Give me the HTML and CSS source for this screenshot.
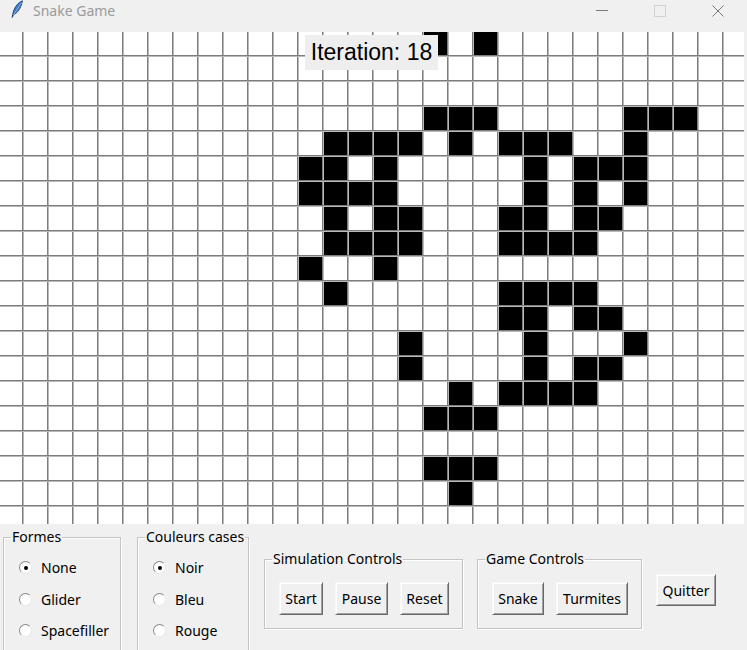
FILE: index.html
```html
<!DOCTYPE html>
<html lang="fr">
<head>
<meta charset="utf-8">
<title>Snake Game</title>
<link rel="stylesheet" href="styles.css">
</head>
<body>
<div class="window">
  <div class="titlebar">
    <svg class="app-icon" width="14" height="20" viewBox="0 0 14 20">
      <path d="M12.5 0.8 C8 2.5 4.5 7 3 13 L2.2 17.5 L3.6 14.5 C7.5 13 10.5 9 12.5 0.8 Z" fill="#3b78c8" stroke="#1d3f72" stroke-width="0.9"/>
      <path d="M11.5 2.5 L3.4 15" stroke="#9cc2f0" stroke-width="0.8"/>
    </svg>
    <span class="title">Snake Game</span>
    <div class="win-buttons">
      <span class="wb"><svg width="12" height="12" viewBox="0 0 12 12"><path d="M0 5.5 H12" stroke="#7a7a7a" stroke-width="1"/></svg></span>
      <span class="wb"><svg width="12" height="12" viewBox="0 0 12 12"><rect x="0.5" y="0.5" width="11" height="11" fill="none" stroke="#d2d2d2" stroke-width="1"/></svg></span>
      <span class="wb"><svg width="12" height="12" viewBox="0 0 12 12"><path d="M0.5 0.5 L11.5 11.5 M11.5 0.5 L0.5 11.5" stroke="#7a7a7a" stroke-width="1"/></svg></span>
    </div>
  </div>

  <div class="board">
    <svg class="grid" width="744" height="492" viewBox="0 0 744 492">
      <defs>
        <pattern id="gridlines" x="-3" y="-2" width="25" height="25" patternUnits="userSpaceOnUse">
          <rect x="0" y="0" width="1" height="25" fill="#7d7d7d"/>
          <rect x="1" y="0" width="1" height="25" fill="#b9b9b9"/>
          <rect x="0" y="0" width="25" height="1" fill="#7d7d7d"/>
          <rect x="0" y="1" width="25" height="1" fill="#b9b9b9"/>
        </pattern>
      </defs>
      <g id="cells" fill="#000"></g>
      <rect x="0" y="0" width="744" height="492" fill="url(#gridlines)"/>
    </svg>
    <div class="iteration">Iteration: 18</div>
  </div>

  <div class="controls">
    <fieldset class="group group-radio">
      <legend>Formes</legend>
      <div class="group-body radio-list">
        <label class="radio-row"><span class="radio checked"></span>None</label>
        <label class="radio-row"><span class="radio"></span>Glider</label>
        <label class="radio-row"><span class="radio"></span>Spacefiller</label>
      </div>
    </fieldset>
    <fieldset class="group group-radio group-colors">
      <legend>Couleurs cases</legend>
      <div class="group-body radio-list">
        <label class="radio-row"><span class="radio checked"></span>Noir</label>
        <label class="radio-row"><span class="radio"></span>Bleu</label>
        <label class="radio-row"><span class="radio"></span>Rouge</label>
      </div>
    </fieldset>
    <fieldset class="group group-buttons">
      <legend>Simulation Controls</legend>
      <div class="group-body button-row">
        <button class="btn btn-start">Start</button>
        <button class="btn btn-pause">Pause</button>
        <button class="btn btn-reset">Reset</button>
      </div>
    </fieldset>
    <fieldset class="group group-buttons group-game">
      <legend>Game Controls</legend>
      <div class="group-body button-row">
        <button class="btn btn-snake">Snake</button>
        <button class="btn btn-turmites">Turmites</button>
      </div>
    </fieldset>
    <button class="btn btn-quit">Quitter</button>
  </div>
</div>
<script src="script.js"></script>
</body>
</html>
```

FILE: styles.css
```css
* { box-sizing: border-box; }

html, body {
  margin: 0;
  padding: 0;
  width: 747px;
  height: 650px;
  overflow: hidden;
  background: #f0f0f0;
  font-family: "Noto Sans", "Open Sans", sans-serif;
  color: #000;
}

.window {
  width: 747px;
  height: 650px;
  display: flex;
  flex-direction: column;
}

/* ---------- title bar ---------- */
.titlebar {
  height: 32px;
  flex: 0 0 32px;
  display: flex;
  align-items: flex-start;
  background: #f0f0f0;
}

.app-icon {
  margin-left: 10px;
  margin-top: 0px;
}

.title {
  margin-left: 9px;
  margin-top: 1px;
  font-size: 14px;
  line-height: 20px;
  color: #9a9a9a;
}

.win-buttons {
  margin-left: auto;
  display: flex;
  height: 32px;
}

.wb {
  width: 58px;
  height: 22px;
  display: flex;
  align-items: center;
  justify-content: center;
}

/* ---------- board ---------- */
.board {
  position: relative;
  width: 744px;
  height: 492px;
  flex: 0 0 492px;
}

.grid {
  display: block;
  background: #ffffff;
}

.iteration {
  position: absolute;
  left: 305px;
  top: 3px;
  width: 133px;
  height: 35px;
  background: #eeeeee;
  font-family: "Liberation Sans", Arial, sans-serif;
  font-size: 23px;
  line-height: 35px;
  text-align: center;
  color: #000;
}

/* ---------- controls ---------- */
.controls {
  flex: 1 1 auto;
  display: flex;
  align-items: flex-start;
  padding-left: 3px;
}

.group {
  margin: 0;
  padding: 0;
  border: 1px solid #c4c4c4;
  box-shadow: inset 1px 1px 0 #ffffff, 1px 1px 0 #ffffff;
  font-size: 14px;
  white-space: nowrap;
}

.group legend {
  padding: 0 1px;
  margin-left: 7px;
  line-height: 18px;
  color: #000;
}

.group-radio {
  width: 118px;
  height: 140px;
  margin-top: 4px;
}

.radio-list {
  display: flex;
  flex-direction: column;
  padding: 6px 0 0 15px;
}

.group-colors {
  width: 112px;
  margin-left: 16px;
}

.radio-row {
  display: flex;
  align-items: center;
  height: 31.5px;
  font-size: 14px;
}

.radio {
  width: 13px;
  height: 13px;
  border-radius: 50%;
  background: #ffffff;
  border: 1px solid;
  border-color: #8a8a8a #e8e8e8 #e8e8e8 #8a8a8a;
  margin-right: 9px;
  position: relative;
  flex: 0 0 13px;
}

.radio.checked::after {
  content: "";
  position: absolute;
  left: 3.5px;
  top: 3.5px;
  width: 4px;
  height: 4px;
  border-radius: 50%;
  background: #000;
}

.group-buttons {
  margin-top: 26px;
  margin-left: 15px;
  height: 79px;
}

.group-game {
  margin-left: 14px;
}

.button-row {
  display: flex;
  align-items: flex-start;
  gap: 12px;
  padding: 14px 13px 0 14px;
}

.btn {
  font-family: "Noto Sans", "Open Sans", sans-serif;
  font-size: 14px;
  height: 33px;
  padding: 0;
  background: #f0f0f0;
  color: #000;
  border: 1px solid;
  border-color: #f8f8f8 #696969 #696969 #f8f8f8;
  box-shadow: inset 1px 1px 0 #ffffff, inset -1px -1px 0 #a0a0a0;
  border-radius: 0;
}

.btn-start { width: 44px; }
.btn-pause { width: 53px; }
.btn-reset { width: 49px; }
.btn-snake { width: 52px; }
.btn-turmites { width: 72px; }

.btn-quit {
  width: 60px;
  height: 32px;
  margin-left: 14px;
  margin-top: 50px;
}
```

FILE: script.js
```js
(function () {
  var rows = {
    0: [17, 19],
    3: [17, 18, 19, 25, 26, 27],
    4: [13, 14, 15, 16, 18, 20, 21, 22, 25],
    5: [12, 13, 15, 21, 23, 24, 25],
    6: [12, 13, 14, 15, 21, 23, 25],
    7: [13, 15, 16, 20, 21, 23, 24],
    8: [13, 14, 15, 16, 20, 21, 22, 23],
    9: [12, 15],
    10: [13, 20, 21, 22, 23],
    11: [20, 21, 23, 24],
    12: [16, 21, 25],
    13: [16, 21, 23, 24],
    14: [18, 20, 21, 22, 23],
    15: [17, 18, 19],
    17: [17, 18, 19],
    18: [18]
  };
  var g = document.getElementById('cells');
  var ns = 'http://www.w3.org/2000/svg';
  Object.keys(rows).forEach(function (j) {
    rows[j].forEach(function (i) {
      var r = document.createElementNS(ns, 'rect');
      r.setAttribute('x', -3 + 25 * i);
      r.setAttribute('y', -2 + 25 * Number(j));
      r.setAttribute('width', 25);
      r.setAttribute('height', 25);
      g.appendChild(r);
    });
  });
})();
```
